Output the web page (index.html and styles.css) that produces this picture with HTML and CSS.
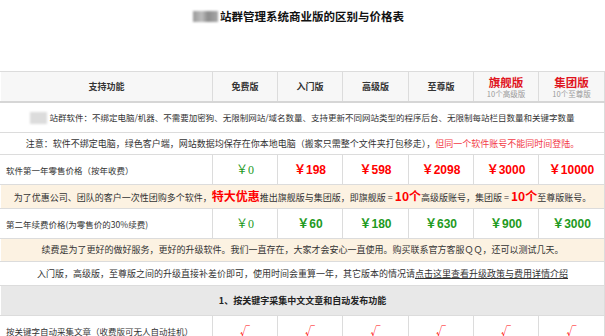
FILE: index.html
```html
<!DOCTYPE html>
<html lang="zh-CN">
<head>
<meta charset="utf-8">
<title>站群管理系统商业版的区别与价格表</title>
<link rel="stylesheet" href="styles.css">
</head>
<body>
<div class="page">
  <h1 class="title"><span class="blur blur-dark"></span>站群管理系统商业版的区别与价格表</h1>
  <table class="price">
    <colgroup>
      <col class="c-feat"><col class="c-ver"><col class="c-ver"><col class="c-ver2"><col class="c-ver"><col class="c-ver"><col class="c-ver2">
    </colgroup>
    <thead>
      <tr class="head">
        <th>支持功能</th>
        <th>免费版</th>
        <th>入门版</th>
        <th>高级版</th>
        <th>至尊版</th>
        <th class="hot"><span class="hot-name">旗舰版</span><span class="hot-sub">10个高级版</span></th>
        <th class="hot"><span class="hot-name">集团版</span><span class="hot-sub">10个至尊版</span></th>
      </tr>
    </thead>
    <tbody>
      <tr class="r-desc">
        <td colspan="7" class="center"><span class="blur blur-light"></span>站群软件：不绑定电脑/机器、不需要加密狗、无限制网站/域名数量、支持更新不同网站类型的程序后台、无限制每站栏目数量和关键字数量</td>
      </tr>
      <tr class="r-note">
        <td colspan="7" class="center">注意：软件不绑定电脑，绿色客户端，网站数据均保存在你本地电脑（搬家只需整个文件夹打包移走），<span class="warn">但同一个软件账号不能同时间登陆。</span></td>
      </tr>
      <tr class="r-price">
        <td class="label">软件第一年零售价格（按年收费）</td>
        <td class="free">￥0</td>
        <td class="red-price">￥198</td>
        <td class="red-price">￥598</td>
        <td class="red-price">￥2098</td>
        <td class="red-price">￥3000</td>
        <td class="red-price">￥10000</td>
      </tr>
      <tr class="r-promo">
        <td colspan="7" class="center">为了优惠公司、团队的客户一次性团购多个软件，<b class="big-red">特大优惠</b>推出旗舰版与集团版，即旗舰版 = <b class="ten">10个</b>高级版账号，集团版 = <b class="ten">10个</b>至尊版账号。</td>
      </tr>
      <tr class="r-price">
        <td class="label">第二年续费价格(为零售价的30%续费)</td>
        <td class="free">￥0</td>
        <td class="green-price">￥60</td>
        <td class="green-price">￥180</td>
        <td class="green-price">￥630</td>
        <td class="green-price">￥900</td>
        <td class="green-price">￥3000</td>
      </tr>
      <tr class="r-renew">
        <td colspan="7" class="center">续费是为了更好的做好服务，更好的升级软件。我们一直存在，大家才会安心一直使用。购买联系官方客服ＱＱ，还可以测试几天。</td>
      </tr>
      <tr class="r-upgrade">
        <td colspan="7" class="center">入门版，高级版，至尊版之间的升级直接补差价即可，使用时间会重算一年，其它版本的情况请<a class="link" href="#">点击这里查看升级政策与费用详情介绍</a></td>
      </tr>
      <tr class="r-section">
        <td colspan="7" class="center">1、按关键字采集中文文章和自动发布功能</td>
      </tr>
      <tr class="r-feature">
        <td class="label">按关键字自动采集文章（收费版可无人自动挂机）</td>
        <td class="check">√</td>
        <td class="check">√</td>
        <td class="check">√</td>
        <td class="check">√</td>
        <td class="check">√</td>
        <td class="check">√</td>
      </tr>
    </tbody>
  </table>
</div>
</body>
</html>
```

FILE: styles.css
```css
html, body {
  margin: 0;
  padding: 0;
  background: #fff;
}
body {
  font-family: "Noto Sans CJK SC", "Liberation Sans", sans-serif;
  color: #333;
  font-size: 9px;
  overflow: hidden;
}
.page {
  width: 605px;
}
.title {
  margin: 0;
  height: 32px;
  line-height: 32px;
  font-size: 11.5px;
  font-weight: bold;
  color: #111;
  text-align: center;
  margin-bottom: 39px;
  padding-right: 8px;
}
.blur {
  display: inline-block;
  vertical-align: middle;
  filter: blur(1.2px);
}
.blur-dark {
  width: 25px;
  height: 11px;
  margin-right: 2px;
  margin-top: -2px;
  background: linear-gradient(90deg, #9a9a9a 0%, #bdbdbd 35%, #8c8c8c 60%, #a8a8a8 100%);
}
.blur-light {
  width: 17px;
  height: 12px;
  margin-right: 2px;
  margin-top: -2px;
  background: #dcdcdc;
}
.price {
  border-collapse: collapse;
  table-layout: fixed;
  width: 605px;
}
.c-feat { width: 212px; }
.c-ver { width: 65px; }
.c-ver2 { width: 66px; }
.price th, .price td {
  border: 1px solid #dcdcdc;
  padding: 0;
  text-align: center;
  vertical-align: middle;
  line-height: 12px;
  white-space: nowrap;
}
.price td:first-child, .price th:first-child {
  border-left-color: transparent;
}
.head th {
  height: 29px;
  background: #f7f7f7;
  font-size: 9px;
  font-weight: bold;
  color: #333;
  border-bottom: 2px solid #d6d6d6;
}
.hot-name {
  display: block;
  font-size: 11.5px;
  line-height: 14px;
  color: #e0141e;
}
.hot-sub {
  display: block;
  font-size: 7.5px;
  line-height: 10px;
  font-weight: normal;
  color: #999;
}
.center {
  text-align: center;
}
.r-desc td { height: 29px; font-size: 8.5px; }
.r-note td { height: 21px; font-size: 9px; }
.warn { color: #f23a46; }
.r-price td { height: 29px; }
.label {
  text-align: left !important;
  padding-left: 5px !important;
  font-size: 8.5px;
}
.free {
  font-family: "Liberation Serif", "Noto Sans CJK SC", serif;
  font-size: 12px;
  color: #1e9a1e;
}
.red-price {
  font-family: "Liberation Sans", "Noto Sans CJK SC", sans-serif;
  font-weight: bold;
  font-size: 12px;
  color: #f00;
}
.green-price {
  font-family: "Liberation Sans", "Noto Sans CJK SC", sans-serif;
  font-weight: bold;
  font-size: 12px;
  color: #1e9a1e;
}
.r-promo td {
  height: 23px;
  background: #fcf2e2;
  font-size: 9px;
}
.big-red {
  font-size: 12px;
  color: #f00;
}
.ten {
  font-size: 12px;
  color: #f00;
}
.r-renew td {
  height: 22px;
  background: #fcf2e2;
  font-size: 9px;
}
.r-upgrade td { height: 23px; font-size: 9px; }
.link {
  color: #333;
  text-decoration: underline;
}
.r-section td {
  height: 29px;
  background: #e8e8e8;
  font-weight: bold;
  font-size: 9px;
  color: #222;
}
.r-feature td { height: 29px; }
.check {
  color: #f00;
  font-size: 10px;
}
```
